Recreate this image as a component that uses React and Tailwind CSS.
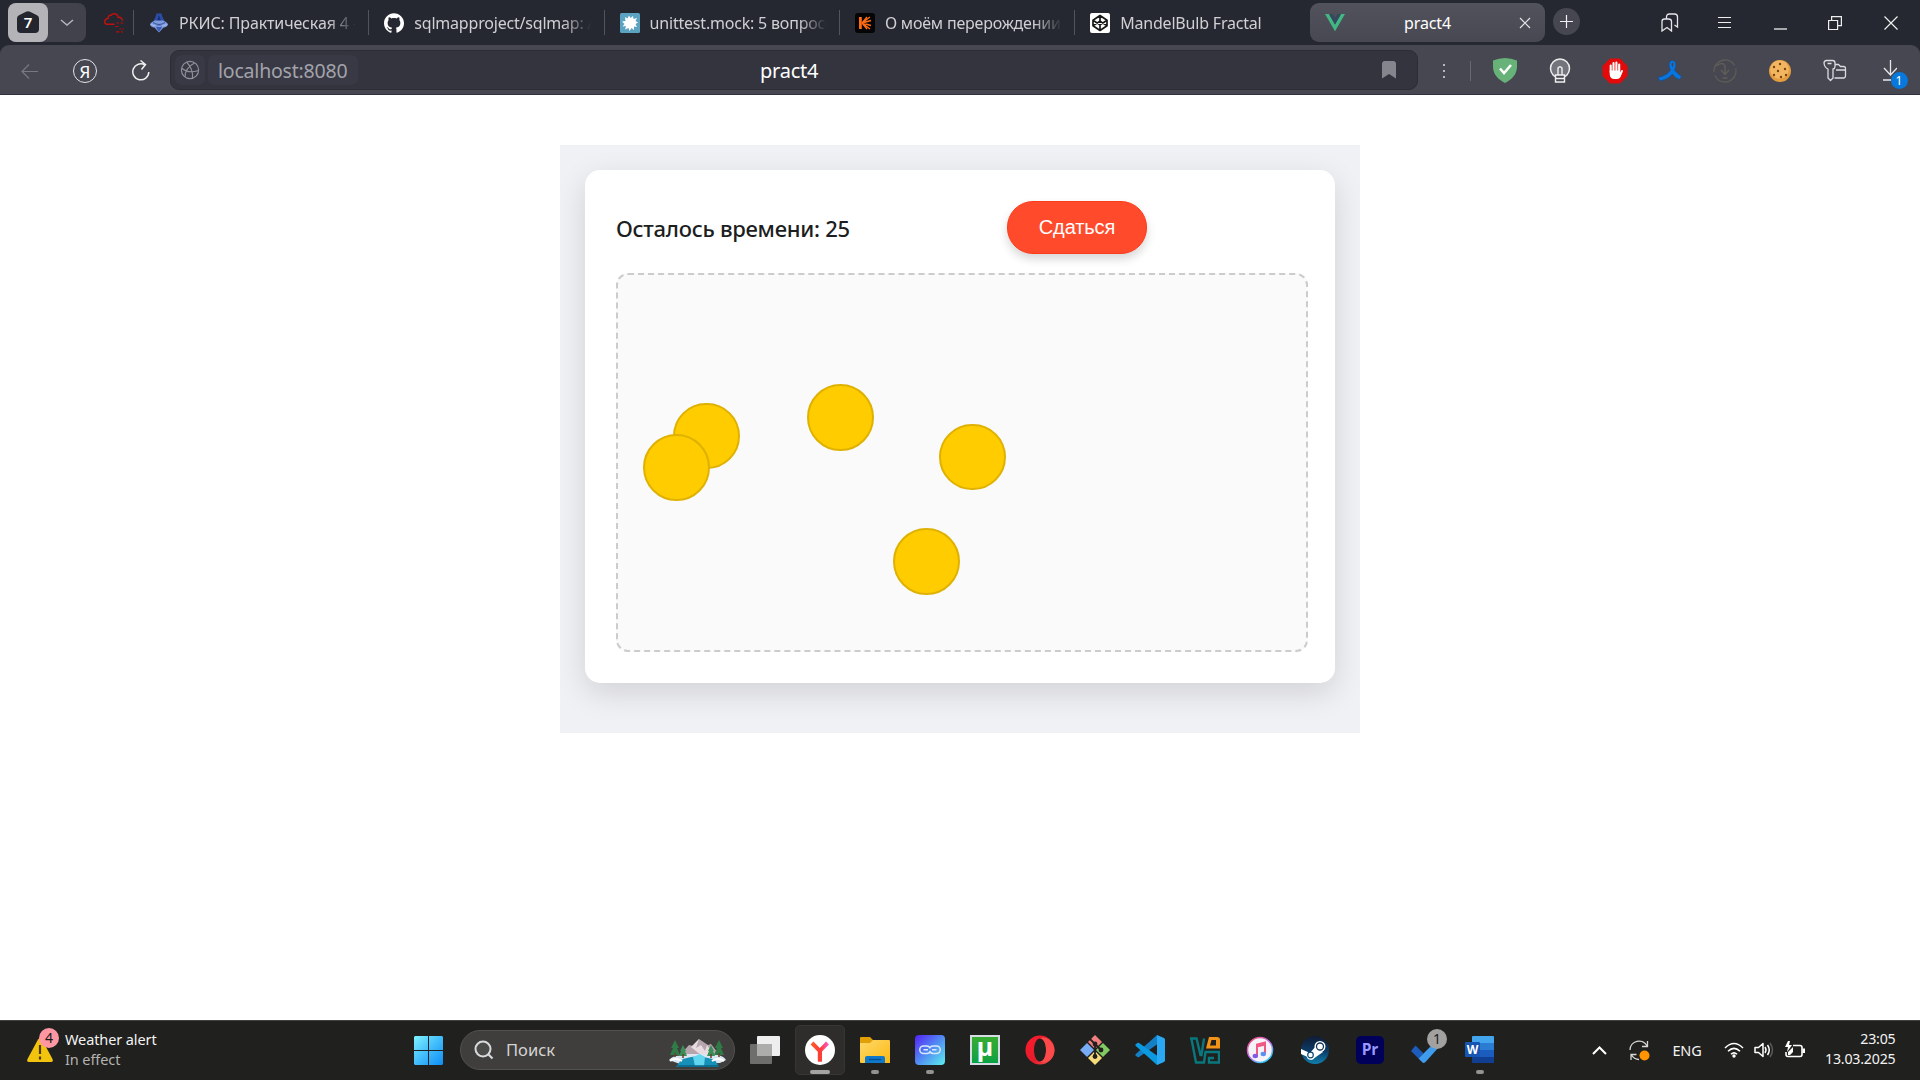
import React from 'react';
import { SiGithub } from 'react-icons/si';

const Svg = ({ w = 24, h = w, vb = `0 0 ${w} ${h}`, className = '', children }) => (
  <svg width={w} height={h} viewBox={vb} fill="none" className={`shrink-0 block ${className}`}>{children}</svg>
);

/* ---------- tab strip ---------- */

const RedCloud = () => (
  <Svg w={20}>
    <path d="M12.500 10h2.500m1.500 0h3M11 13.500h3.500M15.500 16h1.500m1 0h1.500M12 18.800h3.500m1.500 0h2" stroke="#b00d0d" strokeWidth="1.200" />
    <path d="M10.500 11.300H3Q.7 11 .7 8.500T4.300 5.300Q4 2 7 2.300 8 .6 10.500.7 14 1 14 4.300q4-.3 4.300 3.500" stroke="#c01010" strokeWidth="1.400" />
  </Svg>
);
const Spinner = () => (
  <Svg w={20}>
    <path d="M7.500.5h5l1 3.500 2 4h-11l2-4z" fill="#2c4da6" />
    <path d="M10 2 12 8H8z" fill="#19307c" />
    <path d="M1 11c1.500-2 3.500-3 5-3.500h8c1.500.5 3.500 1.500 5 3.500 0 2-2.500 3.500-4.500 3.500L10 19.500l-4.500-5C3.500 14.500 1 13 1 11z" fill="#7f9bdc" />
    <path d="M6.500 12h7l-1 3-2.500 4-2.500-4z" fill="#3b5cb6" /><path d="M4 9.500q6 4 12 0" stroke="#34529f" /><path d="M2 11.500q8 3.500 16 0" stroke="#aabef0" />
  </Svg>
);
const Splat = () => (
  <Svg w={20}>
    <rect width="20" height="20" rx="1.500" fill="#5ba3c0" />
    <path d="m5 4 2.500 1.500L9 2.500l1.500 2.500L13 3l.5 3 3.500-1-1.500 3 2.500 1.500-2.500 1.500 1.500 3-3-.5v3.500l-2.500-2L9.500 18l-1-3L5 16.500l1-3.500-3.500.5L4.500 11 2 8.500 5.500 8z" fill="white" />
  </Svg>
);
const Rays = () => (
  <Svg w={20}>
    <rect width="20" height="20" rx="3" fill="#050505" />
    <path d="M7 10l8-6M7 10l5-6M7 10l9-2.500M7 10l9 2.500M7 10l8 6M7 10l5 6" stroke="#ff6a13" strokeWidth="1.300" />
    <path d="M4 4h2.800v12H4z" fill="#ff6a13" />
  </Svg>
);
const Pen = () => (
  <Svg w={20}>
    <rect width="20" height="20" rx="2" fill="white" />
    <path d="m10 2.500 7 4.700v5.600l-7 4.700-7-4.700V7.200zM3 7.200l7 4.700 7-4.700M3 12.800l7-4.700 7 4.700M10 2.500v5.600m0 3.800v5.600" stroke="#171717" strokeWidth="1.700" strokeLinejoin="round" />
  </Svg>
);
const Vue = () => (
  <Svg w={20} h={20}>
    <path d="M0 1h4l6 10.500L16 1h4L10 18.300z" fill="#41b883" /><path d="M4 1h3.600L10 5.200 12.400 1H16L10 11.500z" fill="#34495e" />
  </Svg>
);

const tabs = [
  [<Spinner />, 'РКИС: Практическая 4 -', 'tracking-[-0.13px]'],
  [<SiGithub size={20} color="white" />, 'sqlmapproject/sqlmap: A', 'tracking-[-0.2px]'],
  [<Splat />, 'unittest.mock: 5 вопросов', 'tracking-[-0.2px]'],
  [<Rays />, 'О моём перерождении в', 'tracking-[-0.2px]'],
  [<Pen />, 'MandelBulb Fractal', 'tracking-[-0.2px]'],
];

const TabStrip = () => (
  <div className="h-[45px] flex items-start bg-[#262831] text-[#d0d0d4]">
    <div className="ml-2 mt-[3px] h-[39px] w-[78px] rounded-[8px] bg-[#41424c] flex items-center">
      <div className="w-10 h-full rounded-[8px] bg-[#b4b4b8] flex items-center justify-center">
        <div className="grid">
          <Svg w={22} h={23} className="col-start-1 row-start-1"><path d="M9 .7Q11-.3 13 .7l7 3.500Q22 5.300 22 7.500V18q0 4-4 4H4q-4 0-4-4V7.500Q0 5.300 2 4.200z" fill="#24262f" /></Svg>
          <span className="col-start-1 row-start-1 text-center text-white text-[15px] leading-[22px] font-semibold">7</span>
        </div>
      </div>
      <Svg w={14} h={8} className="ml-3"><path d="m1 1 6 5 6-5" stroke="#b5b5ba" strokeWidth="1.500" /></Svg>
    </div>
    <div className="mt-[13px] ml-[18px] w-[29px]"><RedCloud /></div>
    {tabs.map(([icon, title, track]) => (
      <div key={title} className="w-[235.300px] h-[45px] flex items-center shrink-0">
        <div className="w-px h-[25px] bg-[#51535d]" />
        <div className="ml-[15px] w-5 h-5">{icon}</div>
        <div className={`ml-[10px] w-[177px] overflow-hidden whitespace-nowrap text-[16px] leading-6 [mask-image:linear-gradient(to_right,black_84%,transparent)] ${track}`}>{title}</div>
      </div>
    ))}
    <div className="ml-[0.500px] mt-[3px] w-[235px] h-[39px] shrink-0 rounded-[9px] bg-linear-to-b from-[#51525b] to-[#484852] flex items-center">
      <div className="ml-[15px]"><Vue /></div>
      <div className="ml-[59px] w-[115px] text-white text-[16px] tracking-[-0.1px]">pract4</div>
      <Svg w={12}><path d="m1 1 10 10M11 1 1 11" stroke="#e5e5e8" strokeWidth="1.200" /></Svg>
    </div>
    <div className="ml-2 mt-2 w-[27px] h-[27px] shrink-0 rounded-full bg-[#464751] flex items-center justify-center">
      <Svg w={13}><path d="M6.500 0v13M0 6.500h13" stroke="#f0f0f2" strokeWidth="1.200" /></Svg>
    </div>
    <div className="flex-1 h-[45px] flex items-center justify-end text-white">
      <div className="w-[55px] flex justify-center">
        <Svg w={18} h={19}><path d="M1 18V8.500q0-2.500 2.500-2.500h4Q10.500 6 10.500 8.500V18L6 14.500zM5.500 6V4q0-3 3-3h5q3 0 3 3v10l-3-2" stroke="#e6e6ea" strokeWidth="1.300" /></Svg>
      </div>
      <div className="w-[55px] flex justify-center"><Svg w={13} h={12}><path d="M0 .5h13M0 5.500h13M0 10.500h13" stroke="#eee" strokeWidth="1.200" /></Svg></div>
      <div className="w-[56px] flex justify-center"><Svg w={13} h={14}><path d="M0 13h13" stroke="#eee" strokeWidth="1.300" /></Svg></div>
      <div className="w-[54px] flex justify-center"><Svg w={14}><path d="M.6 4.500h9v9h-9zM3.600 4V.6h9.800v9H10" stroke="#eee" strokeWidth="1.200" /></Svg></div>
      <div className="w-[58px] pr-px flex justify-center"><Svg w={14}><path d="m.5.5 13 13m0-13-13 13" stroke="#eee" strokeWidth="1.200" /></Svg></div>
    </div>
  </div>
);

/* ---------- toolbar ---------- */

const Shield = () => (
  <Svg w={26}><path d="M13 0q6 0 12 2.500v6C25 17 19 22 13 25 7 22 1 17 1 8.500v-6Q7 0 13 0z" fill="#67b279" /><path d="m8 10.500 4 4.500 7-8" stroke="white" strokeWidth="2.500" /></Svg>
);
const Bulb = () => (
  <Svg w={22} h={26}>
    <circle cx="11" cy="10.500" r="9.500" fill="#74757c" stroke="#eee" strokeWidth="1.500" />
    <path d="M6.500 17h9v7h-9z" fill="#484852" stroke="#eee" strokeWidth="1.400" /><path d="M6.500 20.500h9M9 17v-7q2-2.500 4 0v7" stroke="#eee" strokeWidth="1.400" />
  </Svg>
);
const Stop = () => (
  <Svg w={26}>
    <path d="M8 .5h10L25.500 8v10L18 25.500H8L.5 18V8z" fill="#e20a0a" />
    <path d="M8.700 14V7.500m2.800 5V5m2.900 7.500V4.500m2.800 8V6.500" stroke="white" strokeWidth="2.100" strokeLinecap="round" />
    <path d="M7.700 12.500h10.600v2l1.200-2.500q1.500-.5 1.500 1L18.500 19q-1 2-3.500 2h-2.500q-4.800 0-4.800-5z" fill="white" />
  </Svg>
);
const Ribbon = () => (
  <Svg w={26} h={24}>
    <path d="m1 18.500 5-1.500q5-2 7.500-6C11 6 12 1.500 15.500 1.500S20 6 17.500 11q2 3 7 6.500l-2 3q-5-1.500-7-5.500-3 4.500-12.500 7z" fill="#0876e0" stroke="#124b91" strokeWidth=".6" />
    <path d="M15.500 8.500q-2-4.500 0-5 2 .5 0 5z" fill="#464751" />
  </Svg>
);
const FadedDownload = () => (
  <Svg w={24}><circle cx="12" cy="12" r="11" stroke="#5c5b56" strokeWidth="1.300" strokeDasharray="30 3" /><path d="M3 7q7-5 9 0v8m-4-4 4 4.500 4-4.500M9.500 19h5" stroke="#5f5e57" strokeWidth="1.400" /></Svg>
);
const Cookie = () => (
  <Svg w={24}>
    <circle cx="12" cy="12" r="11" fill="#e59d3f" /><circle cx="11.500" cy="10.500" r="9.300" fill="#f3b660" />
    <path d="M19 0q0 4 4.500 6V0z" fill="#464751" />
    {[[6, 8], [12, 5], [10, 12], [17, 10], [6, 16], [13, 18], [18, 16]].map(([x, y]) => <circle key={`${x}-${y}`} cx={x} cy={y} r="1.200" fill="#794315" />)}
  </Svg>
);
const KeyCard = () => (
  <Svg w={24}>
    <path d="M3.500 1.500h6q2.500 0 2.500 2.500v3.500q0 2-2 2.500v9l-2.500 2.500L5 19v-9Q1.500 8.500 1 4q0-2.500 2.500-2.500zM4.500 4.500h4M12 5.500h3.500l2 2h3q2 0 2 2v7q0 2.500-2 2.500H11.500M13 11h9.500" stroke="#dcdce0" strokeWidth="1.300" strokeLinejoin="round" />
  </Svg>
);

const exts = [<Shield />, <Bulb />, <Stop />, <Ribbon />, <FadedDownload />, <Cookie />, <KeyCard />];

const Toolbar = () => (
  <div className="h-[50px] bg-[#262831]">
    <div className="h-[50px] rounded-t-[9px] bg-[#464751] border-b border-[#30313c] flex items-start">
      <div className="h-[50px] w-[170px] flex items-center pl-[21px] pt-[2px] shrink-0">
        <Svg w={17} h={15}><path d="M17 7.500H1M8 .5l-7 7 7 7" stroke="#777983" strokeWidth="1.200" /></Svg>
        <div className="ml-[35px] w-6 h-6 rounded-full border-[1.500px] border-[#e4e4e7] flex items-center justify-center text-white text-[17px] leading-none">Я</div>
        <Svg w={19} h={22} className="ml-[34px]"><path d="M14 5A8 8 0 1 0 17.800 12M9.500.5l5 4-4 5" stroke="#eee" strokeWidth="1.500" /></Svg>
      </div>
      <div className="mt-[5px] w-[1248px] h-[40px] shrink-0 rounded-[9px] bg-[#34343f] border border-[#2b2c36] flex items-center">
        <div className="ml-1 w-[30px] h-[30px] rounded-[7px] bg-[#383944] flex items-center justify-center">
          <Svg w={20}><circle cx="10" cy="10" r="8.600" stroke="#8f9098" strokeWidth="1.200" /><path d="M6.500 2q7 7 6 16.500M14.500 3Q5 8 5 17M1.500 8q7 6 17 2.500" stroke="#8f9098" strokeWidth="1.100" /></Svg>
        </div>
        <div className="ml-[3px] w-[150px] h-[30px] rounded-[7px] bg-[#383944] pl-[10px] text-[#a3a3ab] text-[19.500px] leading-[31px] tracking-[-0.200px]">localhost:8080</div>
        <div className="ml-[402px] w-[622px] pt-px text-white text-[20px] leading-[30px] tracking-[-0.250px]">pract4</div>
        <Svg w={14} h={18}><path d="M3 0h8q3 0 3 3v14.500L7 13l-7 4.500V3q0-3 3-3z" fill="#85858d" /></Svg>
      </div>
      <div className="h-[50px] pt-[2px] flex flex-1 items-center">
        <Svg w={3} h={15} className="ml-[24.500px]"><path d="M0 0h2v2H0zM0 6h2v2H0zM0 12h2v2H0z" fill="#b6b6bd" /></Svg>
        <div className="ml-6 w-px h-5 bg-[#676872]" />
        <div className="ml-[7px] flex">{exts.map((e, i) => <div key={i} className="w-[55px] h-[30px] flex items-center justify-center">{e}</div>)}</div>
        <div className="relative ml-[20px]">
          <Svg w={14} h={22}><path d="M7.500 0v15M1 8l6.500 7L14 8M0 20h8" stroke="#e7e7ea" strokeWidth="1.300" /></Svg>
          <div className="absolute left-[8px] top-[12px] w-[17px] h-[17px] rounded-full bg-[#0778dc] text-white text-[12px] leading-[17px] text-center">1</div>
        </div>
      </div>
    </div>
  </div>
);

/* ---------- game ---------- */

const balls = ['left-[55px] top-[128px] h-[66px]', 'left-[25px] top-[159px] h-[67px]', 'left-[189px] top-[109px] h-[67px]', 'left-[321px] top-[149px] h-[66px]', 'left-[275px] top-[253px] h-[67px]'];

const Game = () => (
  <main className="h-[925px] bg-white pt-[50px]">
    <div className="mx-auto w-[800px] h-[588px] bg-[#f0f1f5] p-[25px] overflow-hidden">
      <div className="w-[750px] h-[513px] bg-white rounded-[15px] pt-[31px] pl-[31px] shadow-[0_10px_31px_rgba(0,0,0,0.13)]">
        <div className="flex items-center h-[53px]">
          <div className="w-[391px] pt-[2px] text-[#1c1e21] font-['Noto_Sans'] font-medium text-[22px] tracking-[-0.270px] whitespace-nowrap"><span>Осталось времени: 25</span></div>
          <button className="w-[140px] h-[53px] rounded-[26px] bg-[#ff4a2b] border border-[#ff3d1c] pb-[2px] text-white text-[20px] font-['Liberation_Sans'] tracking-[-0.1px] shadow-[0_5px_10px_rgba(0,0,0,0.16)]">Сдаться</button>
        </div>
        <div className="relative mt-[19px] w-[692px] h-[379px] rounded-[12px] border-2 border-dashed border-[#ccc] bg-[#fafafa]">
          {balls.map((b) => <div key={b} className={`absolute w-[67px] rounded-full bg-[#ffcc00] border-2 border-[#dfb100] ${b}`} />)}
        </div>
      </div>
    </div>
  </main>
);

/* ---------- taskbar ---------- */

const WinLogo = () => (
  <Svg w={29}>
    <defs><linearGradient id="win" x1="0" y1="0" x2="29" y2="29" gradientUnits="userSpaceOnUse"><stop stopColor="#7ff3ff" /><stop offset=".5" stopColor="#42bdfb" /><stop offset="1" stopColor="#0f8df5" /></linearGradient></defs>
    <path d="M1 0h13v14H0V1zM15 0h13l1 1v13H15zM0 15h14v14H1l-1-1zM15 15h14v13l-1 1H15z" fill="url(#win)" />
  </Svg>
);
const Lake = () => (
  <Svg w={57} h={28}>
    <path d="M10 17 20 6l4 1 6-7 9 6 3-1 10 13z" fill="#b7a5ad" /><path d="m22 8 8-8-3 9 5-3 4 6 2-6 5 8-10 3z" fill="#e8dce0" />
    <path d="M0 21q5-5 12-4l6-2h22l8 1q7 1 9 5l-6 3-40 1z" fill="#dce6f2" />
    <path d="M12 21q15-7 34 0l4 7H7z" fill="#1790b8" /><path d="m24 18 7-3 5 3-1 9h-9z" fill="#62d6ee" /><path d="M8 27h42" stroke="#0b6388" strokeWidth="1.500" />
    <path d="m6 1 4 8-2 0 3 7H1l3-7H2zM50 1l4 8h-2l3 7H45l3-7h-2z" fill="#2f7a45" /><path d="m14 6 3 6h-1l2 5h-8l2-5h-1zM42 6l3 6h-1l2 5h-8l2-5h-1z" fill="#3b8e58" />
    <path d="M6 14v4M14 15v4M50 14v4M42 15v4" stroke="#66422c" strokeWidth="1.500" />
    <path d="M1 22q5-4 12 0M43 22q6-4 12 0" stroke="white" strokeWidth="2" />
  </Svg>
);
const TaskView = () => (
  <Svg w={30} h={28}><rect x="7" width="23" height="20" rx="1" fill="#eeeeee" /><rect y="8" width="22" height="20" rx="1" fill="#6e6e6d" /><path d="M7 8h15v12H7z" fill="#adadac" /></Svg>
);
const Ya = () => (
  <Svg w={30}>
    <defs><linearGradient id="ya" x1="6" y1="8" x2="24" y2="9" gradientUnits="userSpaceOnUse"><stop stopColor="#ff5b24" /><stop offset=".55" stopColor="#ff3b3b" /><stop offset="1" stopColor="#fa5bd0" /></linearGradient></defs>
    <circle cx="15" cy="15" r="15" fill="white" /><path d="m7 8 7.800 8 7.700-8M14.900 16v10.500" stroke="url(#ya)" strokeWidth="4" /><path d="M12.900 16h4v10.500h-4z" fill="#fb3f35" />
  </Svg>
);
const Folder = () => (
  <Svg w={30} h={28}>
    <defs><linearGradient id="fo" x2="1" y2="1"><stop stopColor="#ffd96a" /><stop offset="1" stopColor="#fbb912" /></linearGradient></defs>
    <path d="M0 2q0-1 1-1h9l3 3h16v8H0z" fill="#e2a007" /><path d="M0 7h10l3-3h16q1 0 1 1v22H1q-1 0-1-1z" fill="url(#fo)" /><path d="M5 27v-5q0-2 2-2h16q2 0 2 2v5z" fill="#0f78c9" /><path d="M9 23.500h12" stroke="#064d91" strokeWidth="1.300" />
  </Svg>
);
const Link = () => (
  <Svg w={30}>
    <defs><linearGradient id="li" x2="1" y2="1"><stop stopColor="#5420f8" /><stop offset=".5" stopColor="#518cf2" /><stop offset="1" stopColor="#5df0ee" /></linearGradient></defs>
    <rect width="30" height="30" rx="4" fill="url(#li)" />
    <path d="M15.500 16.500q-1.200 2-3.500 2H8.500a3.700 3.700 0 0 1 0-7.500H12q2 0 3 2M14.500 13.500q1-2.500 3.500-2.500h3.500a3.700 3.700 0 0 1 0 7.500H18q-2 0-3.500-2.500M8.500 14.800h4.500M17 14.800h4.500" stroke="#d8e8ff" strokeWidth="1.500" />
  </Svg>
);
const Mu = () => (
  <div className="w-[30px] h-[30px] bg-linear-to-b from-[#36ac31] to-[#05a143] border-2 border-[#d5dce3] text-white font-bold font-['Noto_Sans'] text-[25px] leading-[19px] text-center">µ</div>
);
const Opera = () => (
  <Svg w={30}>
    <defs><linearGradient id="op" x2="1" y2="1"><stop stopColor="#ff1b2d" /><stop offset=".6" stopColor="#e31c2b" /><stop offset="1" stopColor="#ff5b52" /></linearGradient></defs>
    <path fillRule="evenodd" d="M15 .5a14.500 14.500 0 1 1 0 29 14.500 14.500 0 0 1 0-29zM15 3.500c-4 0-6 6-6 11.500s2 11.500 6 11.500 6-6 6-11.500-2-11.500-6-11.500z" fill="url(#op)" />
    <path d="M15 3.500c4-3 14 1 14.500 11.500C29 25 20 30 15 26.500c4 0 6-6 6-11.500S19 3.500 15 3.500z" fill="#fb4a49" />
  </Svg>
);
const Git = () => (
  <Svg w={30}>
    <path d="m15 0 7 7-7 7-7-7z" fill="#f27f7f" /><path d="m7 8 7 7-7 7-7-7z" fill="#78acf5" /><path d="m23 8 7 7-7 7-7-7z" fill="#82ca62" /><path d="m15 16 7 7-7 7-7-7z" fill="#f7dd79" />
    <path d="m9 3 6 6v13M15 9l6 6" stroke="#231f1f" strokeWidth="1.800" /><circle cx="15" cy="9" r="2.400" fill="#231f1f" /><circle cx="21" cy="15" r="2.400" fill="#231f1f" /><circle cx="15" cy="21.500" r="2.400" fill="#231f1f" />
  </Svg>
);
const Code = () => (
  <Svg w={30}>
    <path d="M22 0 .8 19q-1 1 0 1.800l1.500 1.300q1 .5 1.800 0L24 8z" fill="#147fc4" /><path d="M22 30 .8 11q-1-1 0-1.800l1.500-1.300q1-.5 1.800 0L24 22z" fill="#0c99df" /><path d="m22 0 7 3q1 .5 1 2v20q0 1.500-1 2l-7 3z" fill="#2aa8f4" />
  </Svg>
);
const VBox = () => (
  <Svg w={30} h={27}>
    <path d="M0 1.500h6.500l4 16.500h1L14 1.500M1.500 2 6 25.500h8l1.500-10.500H29v10.500h-10V21h5" stroke="#08777e" strokeWidth="2.400" />
    <path fillRule="evenodd" d="M19 0h8q3 0 3 3v8.500H16zm2.500 3-1.500 5.500h6V3z" fill="#f29318" />
  </Svg>
);
const Music = () => (
  <Svg w={28}>
    <defs><linearGradient id="mu" x2=".7" y2="1"><stop stopColor="#fa4967" /><stop offset=".55" stopColor="#c570f3" /><stop offset="1" stopColor="#28cef8" /></linearGradient></defs>
    <circle cx="14" cy="14" r="12.500" fill="#f5f2f8" stroke="url(#mu)" strokeWidth="1.500" />
    <path d="M11 20V8.500l8-2V17.500M11 10.500l8-2" stroke="#ee5a83" strokeWidth="2" /><ellipse cx="9.300" cy="20" rx="2.700" ry="2.200" fill="#815be8" /><ellipse cx="17.300" cy="18" rx="2.700" ry="2.200" fill="#5b91f1" />
  </Svg>
);
const Steam = () => (
  <Svg w={30}>
    <defs><linearGradient id="st" x2="0" y2="1"><stop stopColor="#111b35" /><stop offset=".55" stopColor="#0c3c67" /><stop offset="1" stopColor="#1080af" /></linearGradient></defs>
    <circle cx="15" cy="15" r="14" fill="url(#st)" />
    <path d="m1 14 9 4 6-7 7 6-8.500 6a4.500 4.500 0 0 1-8-1.500L1 19z" fill="white" /><circle cx="20" cy="11.500" r="5.500" fill="white" /><circle cx="20" cy="11.500" r="3.500" stroke="#153557" strokeWidth="1.300" /><circle cx="10.500" cy="20" r="2.800" stroke="#124a73" strokeWidth="1.200" />
  </Svg>
);
const Premiere = () => <div className="w-[28px] h-[28px] rounded-[5px] bg-[#00005b] text-[#9a99ff] font-bold text-[15.500px] leading-[26px] text-center font-['Open_Sans'] tracking-[-0.2px]">Pr</div>;
const Todo = () => (
  <div className="relative w-[28px] h-[28px]">
    <Svg w={28} h={28}><path d="m4.500 9.500 8 8-5 5L0 15z" fill="#1b5cbd" /><path d="M7.500 22.500 24 6l4 5-13.500 15q-2 1.500-3 .5z" fill="#3e9bed" /></Svg>
    <div className="absolute left-[16px] -top-[7px] w-5 h-5 rounded-full bg-[#a3a19f] text-[#1b1b1b] text-[14px] leading-5 text-center">1</div>
  </div>
);
const Word = () => (
  <div className="relative">
    <Svg w={30} h={28}><path d="M7 1q0-1 1-1h20q1 0 1 1v6H7z" fill="#42a5ee" /><path d="M7 7h22v7H7z" fill="#2b7cd3" /><path d="M7 14h22v7H7z" fill="#1a5dbe" /><path d="M7 21h22v5q0 1-1 1H8q-1 0-1-1z" fill="#103f91" /><rect y="6" width="15" height="15" rx="1" fill="#1755b4" /></Svg>
    <div className="absolute left-0 top-[6px] w-[15px] h-[15px] text-white font-bold text-[12px] leading-[15px] text-center">W</div>
  </div>
);

const apps = [[<Ya />, 'active'], [<Folder />, 'open'], [<Link />, 'open'], [<Mu />], [<Opera />], [<Git />], [<Code />], [<VBox />], [<Music />], [<Steam />], [<Premiere />], [<Todo />], [<Word />, 'open']];

const AppButton = ({ icon, state }) => (
  <div className="w-[55px] h-[58px] flex items-center justify-center">
    <div className={`w-[50px] h-[50px] rounded-[5px] flex flex-col items-center ${state === 'active' ? 'bg-[#2e2d2c] border border-[#373635]' : 'border border-transparent'}`}>
      <div className="h-[48px] shrink-0 flex items-center">{icon}</div>
      {state && <div className={`-mt-[4px] h-[4px] shrink-0 rounded-full ${state === 'active' ? 'w-5 bg-[#a4a4a3]' : 'w-2 bg-[#92928f]'}`} />}
    </div>
  </div>
);

const Taskbar = () => (
  <footer className="h-[60px] bg-[#20201e] border-t border-[#3f4040] pb-px flex items-center text-[#f3f3f3] font-['Noto_Sans'] text-[14px]">
    <div className="w-[401px] flex items-center pl-[27px]">
      <div className="relative">
        <Svg w={26} h={24}><path d="M11 1.500q2-3 4 0L25.500 21q1 3-1.500 3H2q-2.500 0-1.500-3z" fill="#f3c40e" /><path d="M13 7v9M13 18.500v3" stroke="#4b3c05" strokeWidth="2.200" /></Svg>
        <div className="absolute left-[12px] -top-[10px] w-5 h-5 rounded-full bg-[#ff97a2] text-[#171717] text-[14px] leading-5 text-center">4</div>
      </div>
      <div className="ml-[12px] -mt-[3px] text-[14.500px] leading-5 whitespace-nowrap tracking-[-0.1px]"><div>Weather alert</div><div className="text-[#b3b3b1]">In effect</div></div>
    </div>
    <div className="w-[55px] flex justify-center"><WinLogo /></div>
    <div className="ml-1 w-[275px] h-[40px] rounded-full bg-[#403e3d] border border-[#53514f] flex items-center">
      <Svg w={20} h={20} className="ml-[13px]"><circle cx="9" cy="9" r="7.500" fill="#4b4b4a" stroke="#d7dadd" strokeWidth="2" /><path d="m14.500 14.500 4 4" stroke="#d7dadd" strokeWidth="2.200" /></Svg>
      <div className="ml-[12px] w-[163px] pt-px text-[16.500px] text-[#d4d3d2]">Поиск</div>
      <div className="pt-[6px]"><Lake /></div>
    </div>
    <div className="ml-[2.500px] w-[55px] flex justify-center"><TaskView /></div>
    <div className="flex shrink-0">{apps.map(([icon, state], i) => <AppButton key={i} icon={icon} state={state} />)}</div>
    <div className="flex-1 flex items-center pl-[84px] pr-[24.500px]">
      <Svg w={15} h={9}><path d="m1 8 6.500-6.500L14 8" stroke="white" strokeWidth="2" /></Svg>
      <Svg w={21} h={21} className="ml-[22px]"><path d="M1 10a9 9 0 0 1 17-4M18.500 1v5.500H13M10 19.500A9 9 0 0 1 2.500 15M2 20v-5.500h5.500" stroke="#d7d7d7" strokeWidth="1.300" /><circle cx="15.500" cy="15.500" r="5" fill="#ff9500" /></Svg>
      <span className="ml-[23px] w-[51.500px] pt-px text-[14.500px] tracking-[-0.200px]">ENG</span>
      <Svg w={20} h={16}><path d="M1 6q9-9 18 0M4 9.300q6-6 12 0M7 12.300q3-3 6 0" stroke="white" strokeWidth="1.600" /><circle cx="10" cy="14" r="1.700" fill="white" /></Svg>
      <Svg w={20} h={16} className="ml-[9.500px]"><path d="M1 5.500h3.500L9 1.500v13l-4.500-4H1z" stroke="white" strokeWidth="1.500" strokeLinejoin="round" /><path d="M11 5q2 3 0 6M13.500 3q3.500 5 0 10" stroke="white" strokeWidth="1.500" /><path d="M16 1q5 7 0 14" stroke="#595959" strokeWidth="1.500" /></Svg>
      <Svg w={21} h={18} className="ml-[10px]"><path d="M9 4.500h7q2 0 2 2v7q0 2-2 2H4q-2 0-2-2V11" stroke="white" strokeWidth="1.600" /><path d="M18.500 7.500H21v4.500h-2.500zM4 14v-3l5-5v5l-3 3z" fill="white" /><path d="M4 0 1 6h3l-1 5 5-7H5l1-4z" fill="white" /></Svg>
      <div className="ml-auto -mt-[2px] text-right text-[14.200px] leading-5 tracking-[-0.2px]"><div>23:05</div><div>13.03.2025</div></div>
    </div>
  </footer>
);

export default function App() {
  return (
    <div className="w-[1920px] h-[1080px] overflow-hidden font-['Noto_Sans',sans-serif]">
      <TabStrip />
      <Toolbar />
      <Game />
      <Taskbar />
    </div>
  );
}
